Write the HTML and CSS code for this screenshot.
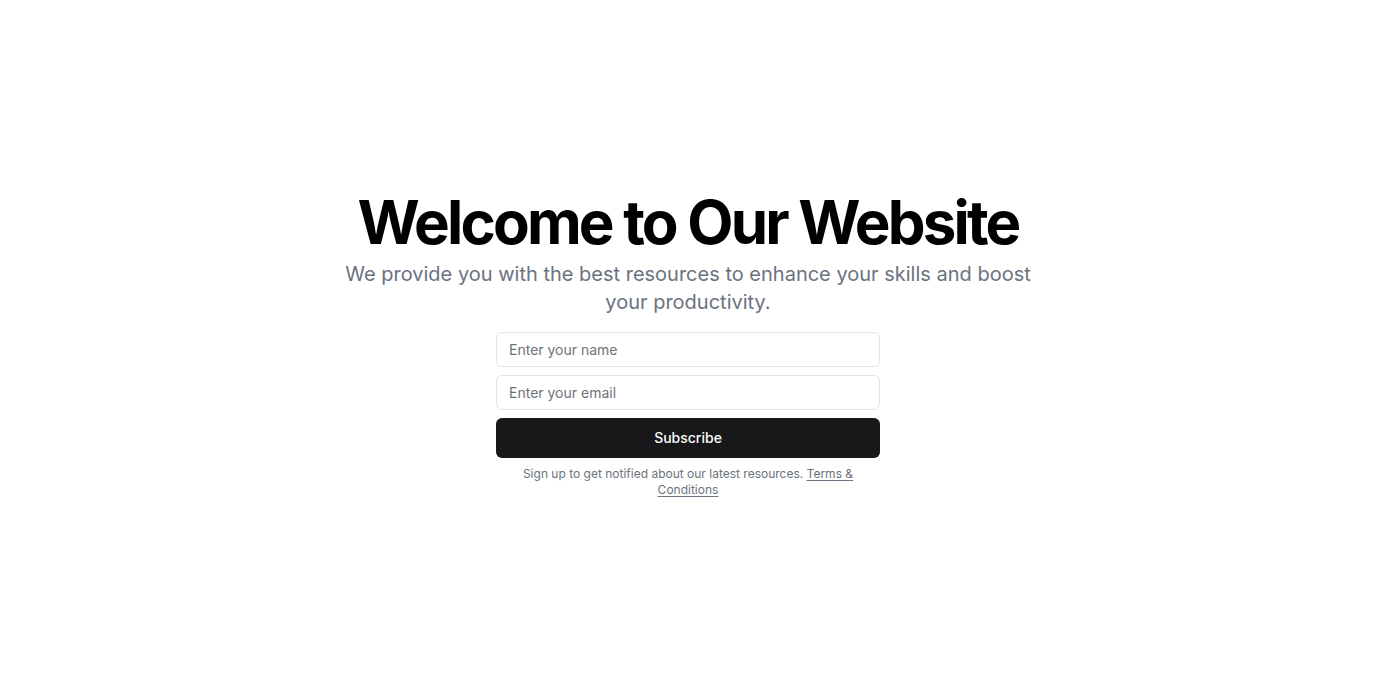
FILE: index.html
```html
<!DOCTYPE html>
<html lang="en">
<head>
<meta charset="utf-8">
<title>Welcome</title>
<link rel="stylesheet" href="styles.css">
</head>
<body>
<main class="hero">
  <div class="intro">
    <h1 class="title">Welcome to Our Website</h1>
    <p class="lead">We provide you with the best resources to enhance your skills and boost your productivity.</p>
  </div>
  <div class="signup">
    <form class="form">
      <input class="field" type="text" placeholder="Enter your name">
      <input class="field" type="email" placeholder="Enter your email">
      <button class="btn" type="submit">Subscribe</button>
    </form>
    <p class="note">Sign up to get notified about our latest resources. <a class="link" href="#">Terms &amp; Conditions</a></p>
  </div>
</main>
</body>
</html>
```

FILE: styles.css
```css
* { box-sizing: border-box; }
html, body { margin: 0; padding: 0; }
body {
  font-family: Inter, "Noto Sans", sans-serif;
  background: #ffffff;
  color: #09090b;
}
.hero {
  min-height: 690px;
  display: flex;
  flex-direction: column;
  align-items: center;
  justify-content: center;
  text-align: center;
  gap: 16px;
  padding: 0 16px;
}
.intro {
  display: flex;
  flex-direction: column;
  align-items: center;
  gap: 8px;
}
.title {
  margin: 0;
  font-size: 60px;
  line-height: 60px;
  font-weight: 700;
  letter-spacing: -2.8px;
  color: #000;
}
.lead {
  margin: 0;
  max-width: 700px;
  font-size: 20px;
  line-height: 28px;
  color: #6b7280;
}
.signup {
  width: 100%;
  max-width: 384px;
  display: flex;
  flex-direction: column;
  gap: 8px;
}
.form {
  display: flex;
  flex-direction: column;
  gap: 8px;
  margin: 0;
}
.field {
  height: 35px;
  width: 100%;
  border: 1px solid #e4e4e7;
  border-radius: 6px;
  padding: 0 12px;
  font-family: inherit;
  font-size: 14px;
  color: #09090b;
  background: #fff;
  outline: none;
}
.field::placeholder { color: #71717a; }
.btn {
  height: 40px;
  width: 100%;
  border: 0;
  border-radius: 6px;
  padding: 0 16px 2px;
  background: #18181b;
  color: #fafafa;
  font-family: inherit;
  font-size: 14px;
  font-weight: 500;
  cursor: pointer;
}
.note {
  margin: 0;
  font-size: 12px;
  line-height: 16px;
  color: #6b7280;
}
.link {
  color: inherit;
  text-decoration: underline;
  text-underline-offset: 2px;
}
```
